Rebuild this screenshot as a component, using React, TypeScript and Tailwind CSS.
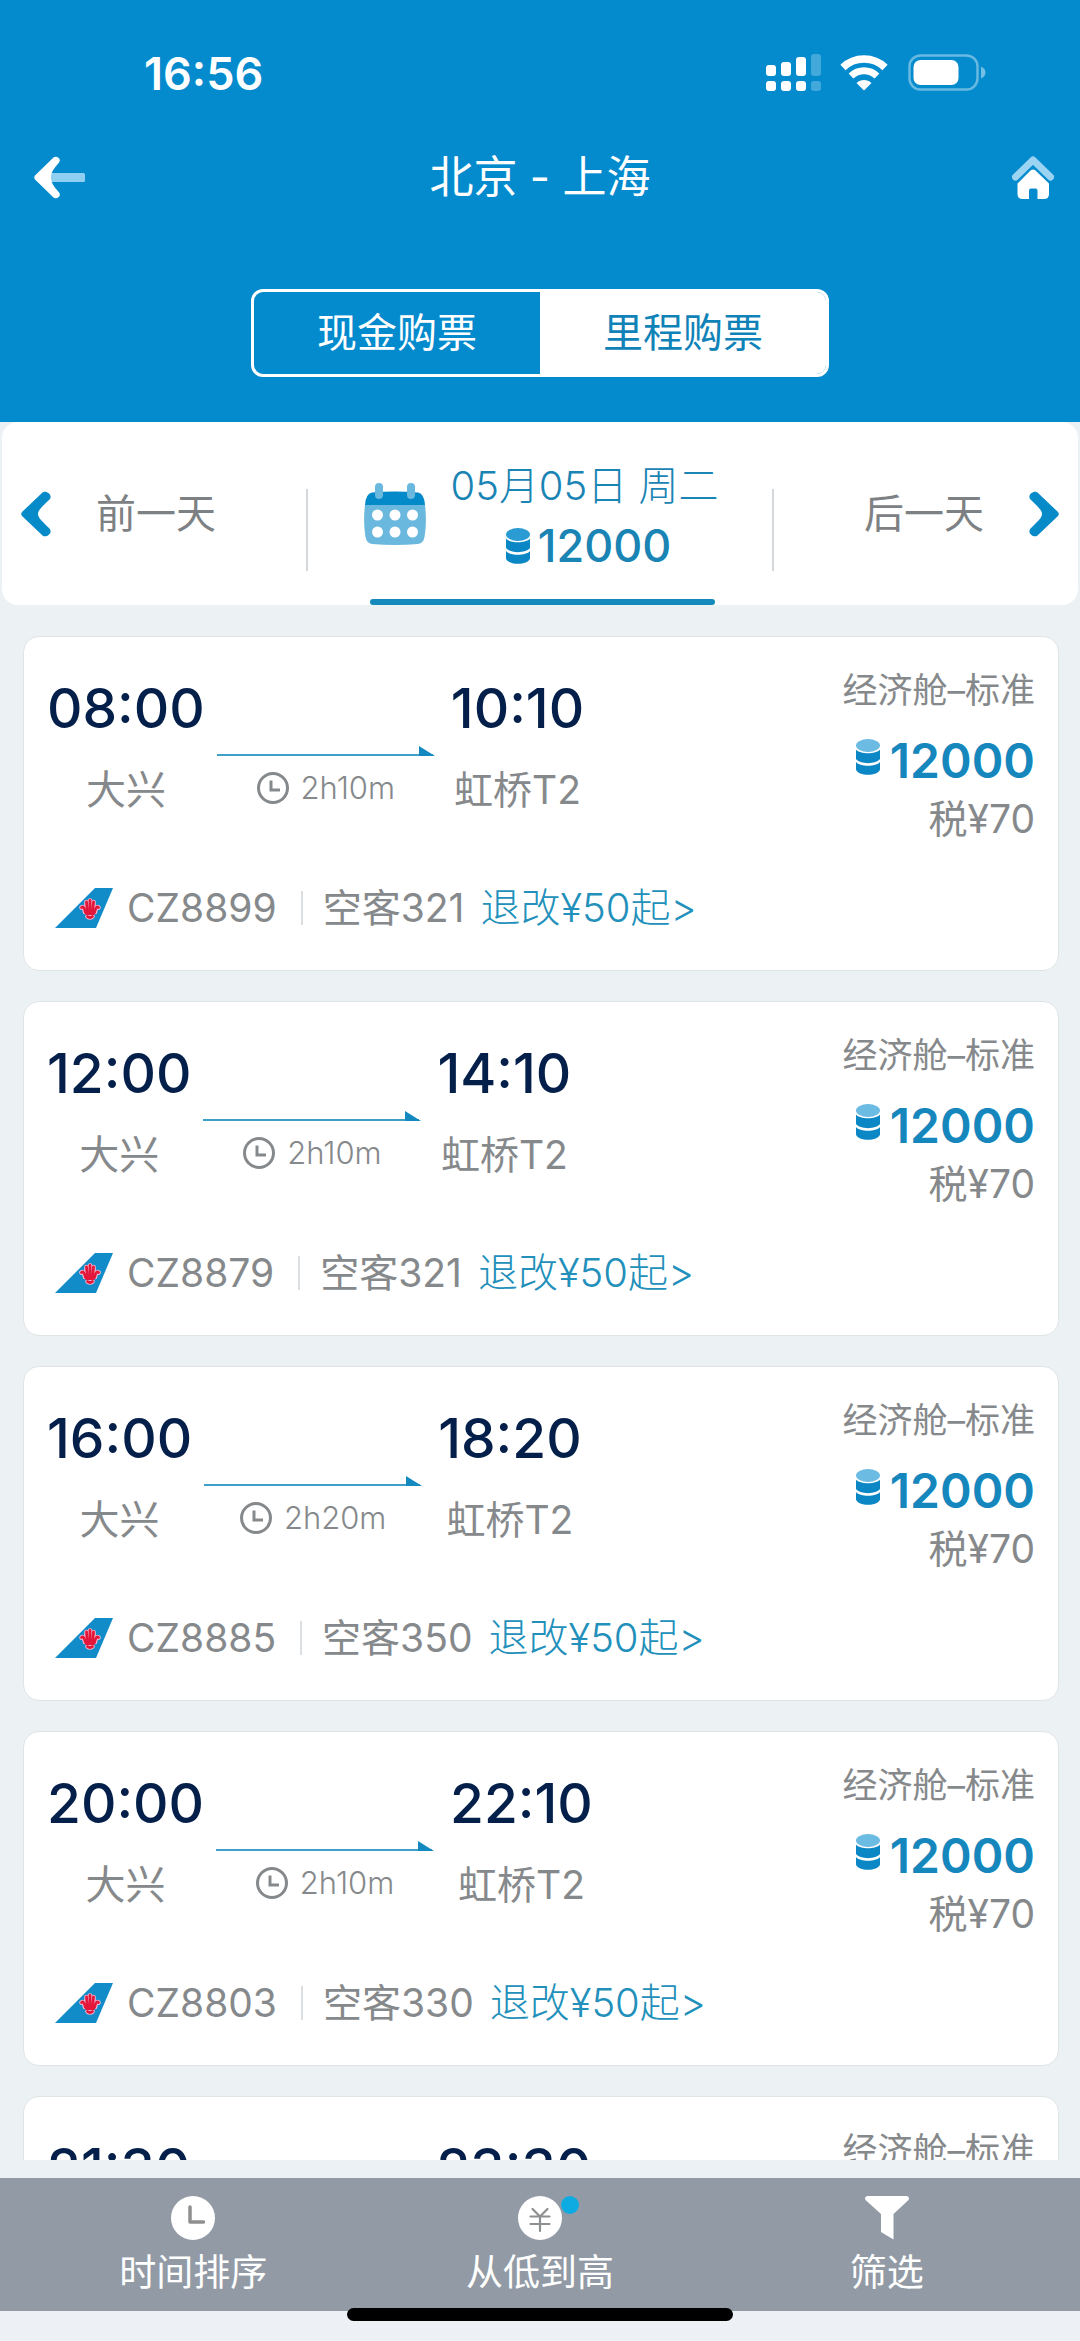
import type { ReactNode } from "react";

type Flight = {
  depart: string;
  arrive: string;
  duration: string;
  code: string;
  plane: string;
};

const flights: Flight[] = [
  { depart: "08:00", arrive: "10:10", duration: "2h10m", code: "CZ8899", plane: "空客321" },
  { depart: "12:00", arrive: "14:10", duration: "2h10m", code: "CZ8879", plane: "空客321" },
  { depart: "16:00", arrive: "18:20", duration: "2h20m", code: "CZ8885", plane: "空客350" },
  { depart: "20:00", arrive: "22:10", duration: "2h10m", code: "CZ8803", plane: "空客330" },
  { depart: "21:30", arrive: "23:30", duration: "2h00m", code: "CZ8889", plane: "空客321" },
];

function StatusBar() {
  return (
    <div className="flex h-[106px] items-center justify-between pt-10 pr-[94px] pl-[144px] text-white">
      <span className="text-[45px] leading-none font-semibold">16:56</span>
      <div className="flex items-center">
        <svg viewBox="0 0 55 38" className="h-[38px] w-[55px]" fill="white">
          <rect x="0" y="11" width="10" height="11" rx="3" />
          <rect x="15" y="8" width="10" height="14" rx="3" />
          <rect x="30" y="3" width="10" height="19" rx="3" />
          <rect x="45" y="0" width="10" height="22" rx="3" opacity="0.25" />
          <rect x="0" y="27" width="10" height="10" rx="3" />
          <rect x="15" y="27" width="10" height="10" rx="3" />
          <rect x="30" y="27" width="10" height="10" rx="3" />
          <rect x="45" y="27" width="10" height="10" rx="3" opacity="0.25" />
        </svg>
        <svg viewBox="0 0 48 36" className="ml-[19px] h-9 w-12" fill="none" stroke="white">
          <path d="M3 12.5C14.5 1.2 33.5 1.2 45 12.5" strokeWidth="7.5" />
          <path d="M11 21C18.5 14 29.5 14 37 21" strokeWidth="7" />
          <path d="M24 35.5L16.5 28C20.5 24 27.5 24 31.5 28Z" fill="white" stroke="none" />
        </svg>
        <svg viewBox="0 0 78 38" className="ml-[20px] h-[38px] w-[78px]">
          <rect x="1.5" y="1.5" width="68" height="34" rx="11" fill="none" stroke="white" strokeWidth="2.5" opacity="0.4" />
          <rect x="5.5" y="6" width="45" height="25" rx="7" fill="white" />
          <path d="M73 12.5C79 15 79 22 73 24.5Z" fill="white" opacity="0.45" />
        </svg>
      </div>
    </div>
  );
}

function NavBar() {
  return (
    <div className="grid h-[142px] grid-cols-[1fr_auto_1fr] items-center px-[26px]">
      <button type="button" aria-label="返回" className="justify-self-start pl-2">
        <svg viewBox="0 0 52 43" className="h-[43px] w-[52px]">
          <rect x="14" y="17" width="37" height="9" rx="1.5" fill="#8fd0f2" />
          <path d="M19.5 1.5C22 -0.5 28 2.5 25 6.5C20 12.5 17 16 17 21.5C17 27 20 30.5 25 36.5C28 40.5 22 43.5 19.5 41.5L1 23.5C0 22.3 0 20.7 1 19.5Z" fill="white" />
        </svg>
      </button>
      <h1 className="text-[44px] leading-none text-white">北京 - 上海</h1>
      <button type="button" aria-label="首页" className="justify-self-end">
        <svg viewBox="0 0 42 43" className="h-[43px] w-[42px]">
          <path d="M3.5 21L21 4L38.5 21" fill="none" stroke="#9bd3f3" strokeWidth="7" strokeLinecap="round" strokeLinejoin="round" />
          <path d="M18.5 14.5Q21 12.5 23.5 14.5L37 27.5V38Q37 43 32 43H25.5V34.5Q25.5 32.5 23.5 32.5H19Q17 32.5 17 34.5V43H10.5Q5.5 43 5.5 38V27.5Z" fill="white" />
        </svg>
      </button>
    </div>
  );
}

function PayTabs() {
  return (
    <div className="mx-auto grid h-[88px] w-[578px] grid-cols-2 overflow-hidden rounded-xl border-[3px] border-white text-[40px] leading-none">
      <button type="button" className="text-white">现金购票</button>
      <button type="button" className="bg-white text-[#0f83b8]">里程购票</button>
    </div>
  );
}

function Coins({ top }: { top: string }) {
  return (
    <svg viewBox="0 0 24 36" className="h-9 w-6 shrink-0">
      <ellipse cx="12" cy="6.5" rx="12" ry="6.5" fill={top} />
      <path d="M0 10.5C4 15.5 20 15.5 24 10.5V20C20 25.5 4 25.5 0 20Z" fill="#0a87c4" />
      <path d="M0 23C4 28 20 28 24 23V30.5C22 37.5 2 37.5 0 30.5Z" fill="#0a87c4" />
    </svg>
  );
}

function Chevron({ flip = false }: { flip?: boolean }) {
  return (
    <svg viewBox="0 0 30 46" className={flip ? "h-[46px] w-[30px] rotate-180" : "h-[46px] w-[30px]"}>
      <path d="M21.5 1.5C25 -1.5 32.5 4 28.5 8.5C22 15 17 19 17 23C17 27 22 31 28.5 37.5C32.5 42 25 47.5 21.5 44.5L1 25Q-0.5 23 1 21Z" fill="#078ac8" />
    </svg>
  );
}

function CalendarIcon() {
  return (
    <svg viewBox="0 0 62 62" className="h-[62px] w-[62px]">
      <path d="M1 22H61C62.5 34 62 44 60.5 54Q59.5 60 54 61Q31 63 8 61Q2.5 60 1.5 54C0 44 -0.5 34 1 22Z" fill="#6bb8de" />
      <path d="M1 22Q1.5 11 8 9.5Q31 7.5 54 9.5Q60.5 11 61 22Z" fill="#0489c9" />
      <rect x="11" y="0" width="8" height="16" rx="4" fill="#6bb8de" />
      <rect x="43" y="0" width="8" height="16" rx="4" fill="#6bb8de" />
      <g fill="white">
        <circle cx="13.5" cy="32" r="5.5" />
        <circle cx="31" cy="32" r="5.5" />
        <circle cx="48.5" cy="32" r="5.5" />
        <circle cx="13.5" cy="49" r="5.5" />
        <circle cx="31" cy="49" r="5.5" />
        <circle cx="48.5" cy="49" r="5.5" />
      </g>
    </svg>
  );
}

function DateBar() {
  return (
    <div className="mx-0.5 flex h-[183px] items-center justify-between rounded-2xl bg-white px-[19px]">
      <button type="button" className="flex items-center gap-[45px] text-[40px] leading-none text-[#7d8183]">
        <Chevron />
        前一天
      </button>
      <div className="flex h-full items-center">
        <span className="mt-8 h-[82px] w-[2px] bg-[#d5d8da]" />
        <button type="button" className="relative flex h-full items-center gap-6 pr-[53px] pl-[56px] text-[#1a84b4]">
          <CalendarIcon />
          <span className="flex flex-col items-center gap-[14px] pt-1">
            <span className="text-[40px] leading-[46px] font-light">05月05日 周二</span>
            <span className="flex items-center gap-2 pl-2 text-[45px] leading-[46px] font-medium">
              <Coins top="#2b9bd3" />
              12000
            </span>
          </span>
          <span className="absolute right-[57px] bottom-0 left-[62px] h-[6px] rounded-full bg-[#138abb]" />
        </button>
        <span className="mt-8 h-[82px] w-[2px] bg-[#d5d8da]" />
      </div>
      <button type="button" className="flex items-center gap-[45px] text-[40px] leading-none text-[#7d8183]">
        后一天
        <Chevron flip />
      </button>
    </div>
  );
}

function TailLogo() {
  return (
    <svg viewBox="0 0 58 40" className="h-10 w-[58px]">
      <path d="M40 0H58L41 40H0Z" fill="#128bc9" />
      <g fill="none" stroke="#f3b6cf" strokeWidth="4.6" strokeLinecap="round">
        <path d="M31.5 14V24M35 12.5V24M38.5 14V24" />
        <path d="M26.5 19.5Q29 18 30 24M43.5 19.5Q41 18 40 24" />
        <path d="M32.5 28.5Q35 30.5 37.5 28.5" />
      </g>
      <g fill="none" stroke="#e3173a" strokeWidth="2.8" strokeLinecap="round">
        <path d="M31.5 14L32.5 25M35 12.5V25M38.5 14L37.5 25" />
        <path d="M26.5 19.5Q29 17.5 30.5 24.5M43.5 19.5Q41 17.5 39.5 24.5" />
        <path d="M31.5 25.5H38.5M32.5 28.5Q35 30.5 37.5 28.5" />
      </g>
    </svg>
  );
}

function FlightCard({ flight }: { flight: Flight }) {
  return (
    <article className="flex h-[335px] shrink-0 flex-col rounded-2xl border border-[#dfe4e6] bg-white px-[23px] text-[#86898b]">
      <div className="flex justify-between">
        <div className="flex pt-[41px]">
          <div className="flex flex-col items-center">
            <time className="text-[55px] leading-[60px] font-medium text-[#04204a]">{flight.depart}</time>
            <span className="mt-7 text-[40px] leading-[48px]">大兴</span>
          </div>
          <div className="mr-4 ml-3 flex w-[218px] flex-col items-center pt-[68px]">
            <svg viewBox="0 0 218 10" className="h-[10px] w-full">
              <path d="M0 9H216" stroke="#3f9fc8" strokeWidth="2" />
              <path d="M202 0L218 10H202Z" fill="#1489c0" />
            </svg>
            <span className="mt-4 flex items-center gap-3 text-[31px] leading-8 font-light">
              <svg viewBox="0 0 32 32" className="size-8" fill="none" stroke="#86898b" strokeWidth="3">
                <circle cx="16" cy="16" r="14.5" />
                <path d="M14 8.5V18H23" />
              </svg>
              {flight.duration}
            </span>
          </div>
          <div className="flex flex-col items-center">
            <time className="text-[55px] leading-[60px] font-medium text-[#04204a]">{flight.arrive}</time>
            <span className="mt-7 text-[39px] leading-[48px]">虹桥T2</span>
          </div>
        </div>
        <div className="flex flex-col items-end pt-8">
          <span className="text-[35px] leading-[42px]">经济舱–标准</span>
          <span className="mt-5 flex items-start gap-[10px] text-[48px] leading-[60px] font-semibold text-[#1687bd]">
            <span className="flex pt-2">
              <Coins top="#6bbbe3" />
            </span>
            12000
          </span>
          <span className="mt-1 text-[39px] leading-[48px]">税¥70</span>
        </div>
      </div>
      <div className="mt-[41px] flex items-center pl-2 text-[39px] leading-[48px]">
        <TailLogo />
        <span className="ml-[14px]">{flight.code}</span>
        <span className="mr-5 ml-6 h-[34px] w-[2px] bg-[#dcdfe1]" />
        <span>{flight.plane}</span>
        <a href="#rules" className="ml-4 text-[40px] font-light text-[#2290ba]">退改¥50起&gt;</a>
      </div>
    </article>
  );
}

function BottomItem({ label, children }: { label: string; children: ReactNode }) {
  return (
    <button type="button" className="flex flex-col items-center gap-[10px] pt-[18px] text-[37px] leading-[46px] text-white">
      {children}
      {label}
    </button>
  );
}

function BottomBar() {
  return (
    <nav className="mt-[18px] grid h-[133px] shrink-0 grid-cols-3 bg-[#929ba5] px-5">
      <BottomItem label="时间排序">
        <svg viewBox="0 0 44 44" className="size-11">
          <circle cx="22" cy="22" r="22" fill="white" />
          <path d="M19 11V26H32.5" fill="none" stroke="#8e8f90" strokeWidth="3.5" strokeLinecap="round" strokeLinejoin="round" />
        </svg>
      </BottomItem>
      <BottomItem label="从低到高">
        <span className="relative">
          <svg viewBox="0 0 44 44" className="size-11">
            <circle cx="22" cy="22" r="22" fill="white" />
            <path d="M14.5 13L22 20.5L29.5 13M22 20.5V35M12.5 20.5H31.5M12.5 28H31.5" fill="none" stroke="#8e8f90" strokeWidth="2.2" strokeLinecap="round" />
          </svg>
          <span className="absolute top-0 left-[43px] size-[18px] rounded-full bg-[#0eaae2]" />
        </span>
      </BottomItem>
      <BottomItem label="筛选">
        <svg viewBox="0 0 44 44" className="size-11" fill="white">
          <path d="M2 0H42Q45 1 43.5 4L28.5 18V43.5L16 36V18L0.5 4Q-1 1 2 0Z" />
        </svg>
      </BottomItem>
    </nav>
  );
}

function App() {
  return (
    <div className="flex h-screen flex-col overflow-hidden bg-[#ecf1f3] font-['Inter','Noto_Sans_CJK_SC',sans-serif]">
      <header className="h-[422px] shrink-0 bg-[#048bce]">
        <StatusBar />
        <NavBar />
        <div className="pt-[41px]">
          <PayTabs />
        </div>
      </header>
      <DateBar />
      <main className="mt-[31px] flex min-h-0 flex-1 flex-col gap-[30px] overflow-y-auto pr-[21px] pl-[23px] [scrollbar-width:none]">
        {flights.map((flight) => (
          <FlightCard key={flight.code} flight={flight} />
        ))}
      </main>
      <BottomBar />
      <footer className="relative h-[30px] shrink-0 bg-[#edf0f4]">
        <span className="absolute -top-[3px] left-1/2 h-[13px] w-[386px] -translate-x-1/2 rounded-full bg-black" />
      </footer>
    </div>
  );
}

export default App;
